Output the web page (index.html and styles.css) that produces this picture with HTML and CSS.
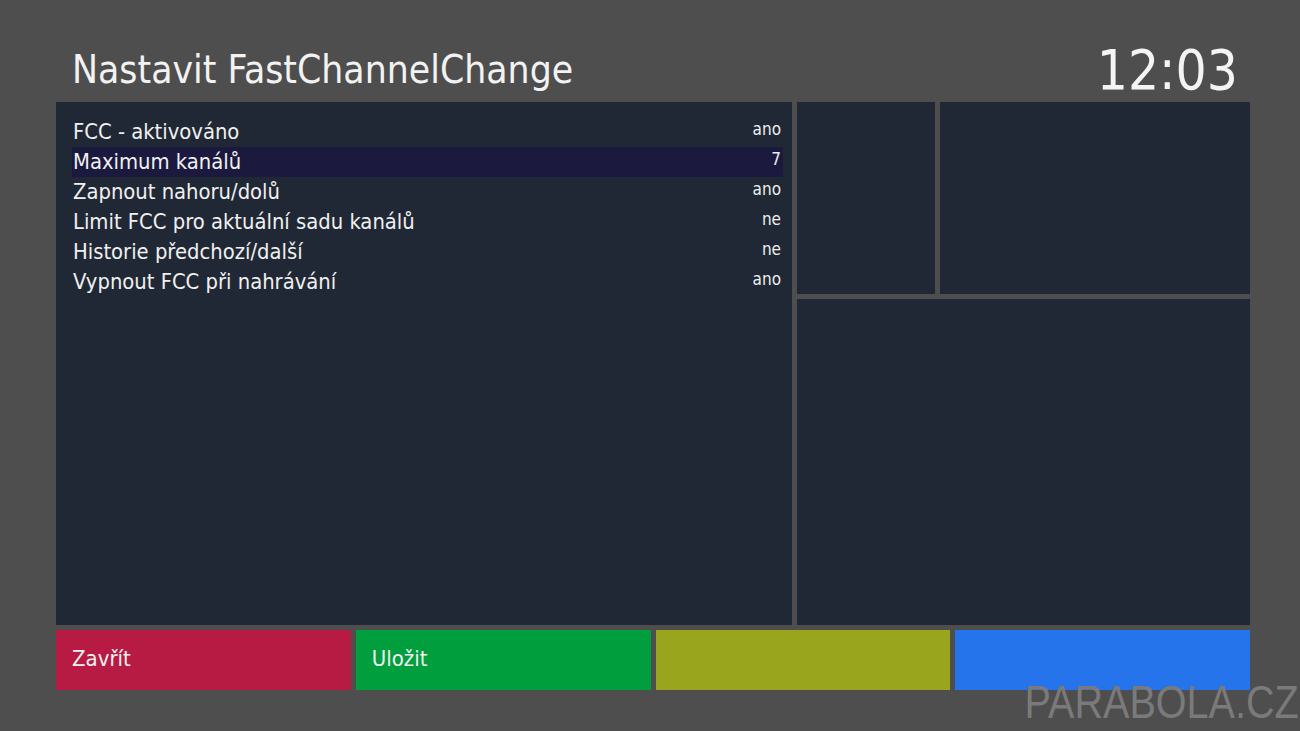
FILE: index.html
```html
<!DOCTYPE html>
<html lang="cs">
<head>
<meta charset="utf-8">
<title>Nastavit FastChannelChange</title>
<link rel="stylesheet" href="styles.css">
</head>
<body>
<div class="screen">
  <header class="header">
    <h1 class="title">Nastavit FastChannelChange</h1>
    <div class="clock">12:03</div>
  </header>
  <main class="main">
    <section class="list-panel">
      <div class="row"><span class="label">FCC - aktivováno</span><span class="value">ano</span></div>
      <div class="row selected"><span class="label">Maximum kanálů</span><span class="value">7</span></div>
      <div class="row"><span class="label">Zapnout nahoru/dolů</span><span class="value">ano</span></div>
      <div class="row"><span class="label">Limit FCC pro aktuální sadu kanálů</span><span class="value">ne</span></div>
      <div class="row"><span class="label">Historie předchozí/další</span><span class="value">ne</span></div>
      <div class="row"><span class="label">Vypnout FCC při nahrávání</span><span class="value">ano</span></div>
    </section>
    <section class="side">
      <div class="side-top">
        <div class="pane pane-small"></div>
        <div class="pane pane-wide"></div>
      </div>
      <div class="pane pane-bottom"></div>
    </section>
  </main>
  <footer class="buttons">
    <div class="btn red">Zavřít</div>
    <div class="btn green">Uložit</div>
    <div class="btn yellow"></div>
    <div class="btn blue"></div>
  </footer>
  <div class="watermark">PARABOLA.CZ</div>
</div>
</body>
</html>
```
FILE: styles.css
```css
html, body {
  margin: 0;
  padding: 0;
  background: #4e4e4e;
}
body {
  width: 1300px;
  height: 731px;
  overflow: hidden;
  font-family: "DejaVu Sans Condensed", "DejaVu Sans", sans-serif;
  color: #eeeeee;
}
.screen {
  position: relative;
  width: 1300px;
  height: 731px;
  padding: 0 50px 0 56px;
  box-sizing: border-box;
}
.header {
  height: 102px;
  display: flex;
  justify-content: space-between;
  align-items: flex-end;
}
.title {
  margin: 0 0 0 16px;
  font-weight: normal;
  font-size: 38.7px;
  line-height: 1;
  padding-bottom: 12px;
  color: #f2f2f2;
}
.clock {
  font-size: 54.5px;
  line-height: 1;
  padding-bottom: 5px;
  margin-right: 12px;
  color: #f4f4f4;
}
.main {
  display: flex;
  gap: 5px;
  height: 523px;
}
.list-panel {
  width: 736px;
  background: #212835;
  padding: 15px 9px 0 16px;
  box-sizing: border-box;
}
.row {
  height: 30px;
  display: flex;
  justify-content: space-between;
  align-items: center;
  padding: 0 2px 0 1px;
}
.row.selected {
  background: #1b1a3e;
}
.label {
  font-size: 21.8px;
  color: #f0f0f0;
  position: relative;
  top: -1px;
}
.value {
  font-size: 17px;
  color: #eeeeee;
  position: relative;
  top: -3px;
}
.side {
  flex: 1;
  display: flex;
  flex-direction: column;
  gap: 5px;
}
.side-top {
  display: flex;
  gap: 5px;
  height: 192px;
}
.pane {
  background: #212835;
}
.pane-small {
  width: 138px;
}
.pane-wide {
  flex: 1;
}
.pane-bottom {
  flex: 1;
}
.buttons {
  margin-top: 5px;
  display: grid;
  grid-template-columns: repeat(4, 1fr);
  gap: 5px;
  height: 60px;
}
.btn {
  display: flex;
  align-items: center;
  padding: 0 0 3px 16px;
  font-size: 22px;
  color: #f0f0f0;
}
.red { background: #b71b44; }
.green { background: #009e3d; }
.yellow { background: #9aa51e; }
.blue { background: #2574eb; }
.watermark {
  position: absolute;
  right: 1px;
  top: 679px;
  font-family: "Liberation Sans", Arial, sans-serif;
  font-size: 46px;
  line-height: 1;
  color: #7a7a7a;
  transform: scaleX(0.86);
  transform-origin: right center;
}
```
